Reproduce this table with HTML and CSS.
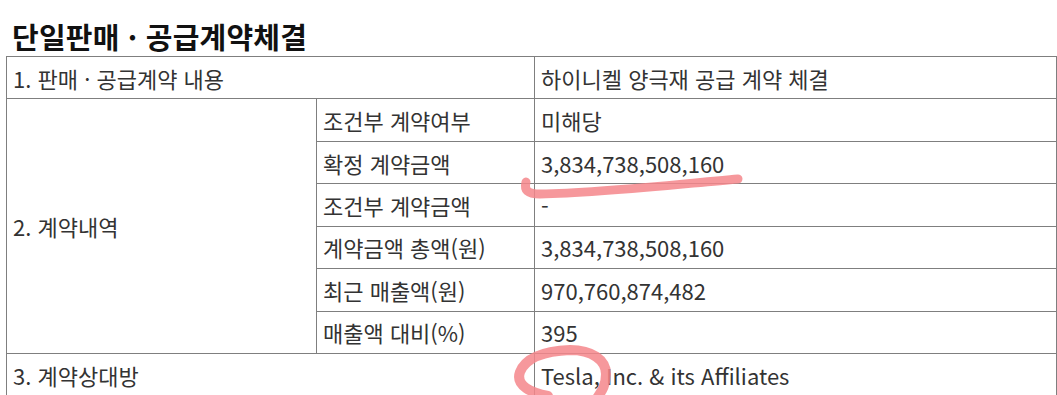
FILE: index.html
```html
<!DOCTYPE html>
<html lang="ko">
<head>
<meta charset="utf-8">
<link rel="stylesheet" href="styles.css">
</head>
<body>
<div class="page">
  <h1 class="title">단일판매 · 공급계약체결</h1>
  <table class="disc">
    <colgroup>
      <col class="c1"><col class="c2"><col class="c3">
    </colgroup>
    <tr><td colspan="2">1. 판매 · 공급계약 내용</td><td>하이니켈 양극재 공급 계약 체결</td></tr>
    <tr><td rowspan="6">2. 계약내역</td><td>조건부 계약여부</td><td>미해당</td></tr>
    <tr><td>확정 계약금액</td><td>3,834,738,508,160</td></tr>
    <tr><td>조건부 계약금액</td><td>-</td></tr>
    <tr><td>계약금액 총액(원)</td><td>3,834,738,508,160</td></tr>
    <tr><td>최근 매출액(원)</td><td>970,760,874,482</td></tr>
    <tr><td>매출액 대비(%)</td><td>395</td></tr>
    <tr><td colspan="2">3. 계약상대방</td><td>Tesla, Inc. &amp; its Affiliates</td></tr>
  </table>
  <svg class="marks" width="1057" height="395" viewBox="0 0 1057 395">
    <path d="M526 182 C524 190 527 194 540 194 C600 193 680 184 738 179" />
    <path class="ring" d="M548 396 C532 393 515 386 520 372 C526 357 546 351 570 350 C592 350 606 360 606 374 C606 386 601 392 597 398" />
  </svg>
</div>
</body>
</html>
```

FILE: styles.css
```css
html, body {
  margin: 0;
  padding: 0;
  background: #ffffff;
}
.page {
  position: relative;
  width: 1057px;
  height: 395px;
  overflow: hidden;
  padding-left: 6px;
  box-sizing: border-box;
  font-family: "Noto Sans CJK KR", "Noto Sans", sans-serif;
}
.title {
  margin: 0;
  padding: 18px 0 0 6px;
  height: 38px;
  box-sizing: content-box;
  font-size: 29px;
  line-height: 36px;
  font-weight: 700;
  color: #111111;
  letter-spacing: 0.2px;
}
.disc {
  border-collapse: collapse;
  width: 1050px;
  table-layout: fixed;
  color: #333333;
  font-size: 22px;
}
.c1 { width: 310px; }
.c2 { width: 218px; }
.c3 { width: 522px; }
.disc td {
  border: 1px solid #7f7f7f;
  height: 42.43px;
  padding: 0 6px;
  box-sizing: border-box;
  line-height: 30px;
  vertical-align: middle;
  white-space: nowrap;
}
.marks {
  position: absolute;
  left: 0;
  top: 0;
  pointer-events: none;
}
.marks path {
  fill: none;
  stroke: #f4868b;
  stroke-opacity: 0.85;
  stroke-width: 9;
  stroke-linecap: round;
  stroke-linejoin: round;
}
.marks .ring {
  stroke-width: 10;
}
```
